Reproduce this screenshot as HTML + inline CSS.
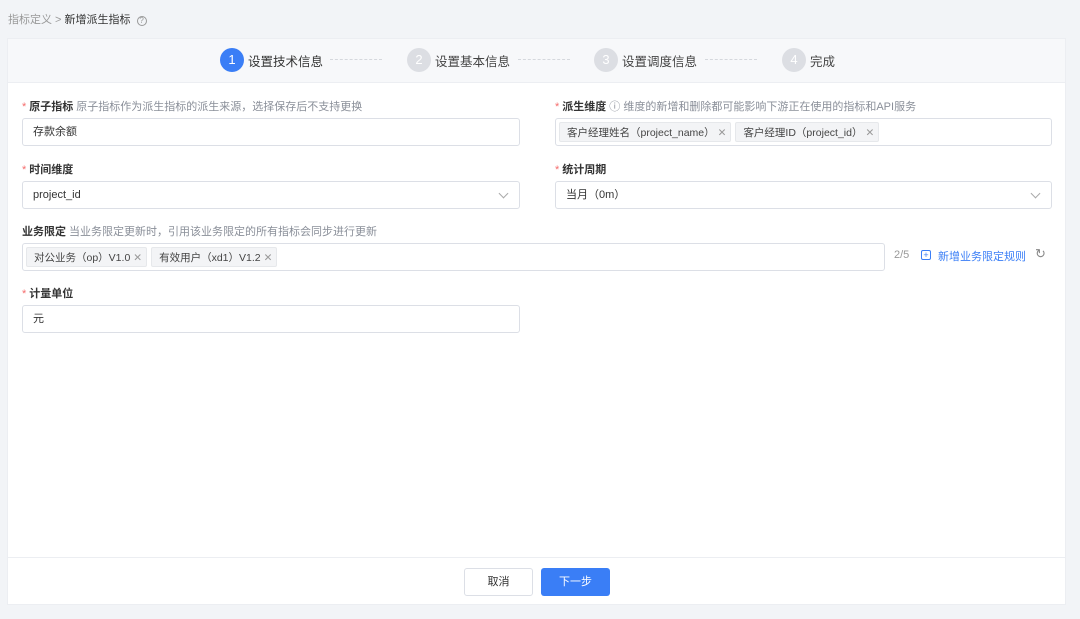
<!DOCTYPE html>
<html><head><meta charset="utf-8"><style>
*{box-sizing:border-box;margin:0;padding:0}
body{width:1080px;height:619px;background:#f2f4f7;font-family:"Liberation Sans","Noto Sans CJK SC",sans-serif;font-size:12px;color:#333;position:relative;overflow:hidden}
.a{position:absolute}
.card{left:7px;top:38px;width:1059px;height:567px;background:#fff;border:1px solid #eceef2}
.steps{left:0;top:0;width:1057px;height:44px;background:#f7f8fa;border-bottom:1px solid #eceef2}
.c{width:24px;height:24px;border-radius:50%;background:#dcdee3;color:#fff;text-align:center;line-height:24px;font-size:13px;top:9px}
.st{top:12px;font-size:12.5px;color:#444}
.dash{top:20px;width:52px;border-top:1px dashed #d5d8dd}
.lb{font-size:11px;color:#333;font-weight:bold}
.lb i{color:#f56c6c;font-style:normal;font-weight:normal;margin-right:3px}
.lb span{font-weight:normal;color:#8a8f99;margin-left:3px}
.in{height:28px;border:1px solid #dcdfe6;border-radius:3px;font-size:11px;padding-left:10px;line-height:26px;color:#333}
.tag{display:inline-block;height:20px;line-height:20px;background:#f3f4f6;border:1px solid #e6e8eb;border-radius:2px;padding:0 4px 0 7px;margin-right:4px;font-size:10.5px;color:#444}
.tag b{font-weight:normal;color:#999;margin-left:3px}
.chev{right:12px;top:8px;width:7px;height:7px;border-right:1px solid #aaa;border-bottom:1px solid #aaa;transform:rotate(45deg)}
</style></head><body>
<div class="a" style="left:8px;top:11px;font-size:11px;color:#999">指标定义 &gt; <span style="color:#333">新增派生指标</span> <span style="display:inline-block;width:10px;height:10px;border:1px solid #999;border-radius:50%;font-size:8px;line-height:8px;text-align:center;margin-left:3px">?</span></div>
<div class="a card">
 <div class="a steps">
  <div class="a c" style="left:212px;background:#3a7ef6">1</div><div class="a st" style="left:240px;color:#333">设置技术信息</div><div class="a dash" style="left:322px"></div>
  <div class="a c" style="left:399px">2</div><div class="a st" style="left:427px">设置基本信息</div><div class="a dash" style="left:510px"></div>
  <div class="a c" style="left:586px">3</div><div class="a st" style="left:614px">设置调度信息</div><div class="a dash" style="left:697px"></div>
  <div class="a c" style="left:774px">4</div><div class="a st" style="left:802px">完成</div>
 </div>
 <div class="a lb" style="left:14px;top:59px"><i>*</i>原子指标<span>原子指标作为派生指标的派生来源，选择保存后不支持更换</span></div>
 <div class="a in" style="left:14px;top:79px;width:498px">存款余额</div>
 <div class="a lb" style="left:547px;top:59px"><i>*</i>派生维度<span>ⓘ 维度的新增和删除都可能影响下游正在使用的指标和API服务</span></div>
 <div class="a in" style="left:547px;top:79px;width:497px;padding-left:3px;padding-top:3px;line-height:normal"><span class="tag">客户经理姓名（project_name）<b>✕</b></span><span class="tag">客户经理ID（project_id）<b>✕</b></span></div>
 <div class="a lb" style="left:14px;top:122px"><i>*</i>时间维度</div>
 <div class="a in" style="left:14px;top:142px;width:498px">project_id<div class="a chev"></div></div>
 <div class="a lb" style="left:547px;top:122px"><i>*</i>统计周期</div>
 <div class="a in" style="left:547px;top:142px;width:497px">当月（0m）<div class="a chev"></div></div>
 <div class="a lb" style="left:14px;top:184px">业务限定<span>当业务限定更新时，引用该业务限定的所有指标会同步进行更新</span></div>
 <div class="a in" style="left:14px;top:204px;width:863px;padding-left:3px;padding-top:3px;line-height:normal"><span class="tag">对公业务（op）V1.0<b>✕</b></span><span class="tag">有效用户（xd1）V1.2<b>✕</b></span></div>
 <div class="a" style="left:886px;top:210px;font-size:11px;color:#999">2/5</div>
 <div class="a" style="left:913px;top:211px;width:10px;height:10px;border:1px solid #3a7ef6;border-radius:2px;color:#3a7ef6;font-size:9px;line-height:8px;text-align:center">+</div>
 <div class="a" style="left:930px;top:209px;font-size:11px;color:#3a7ef6">新增业务限定规则</div>
 <div class="a" style="left:1027px;top:207px;font-size:13px;color:#888">↻</div>
 <div class="a lb" style="left:14px;top:246px"><i>*</i>计量单位</div>
 <div class="a in" style="left:14px;top:266px;width:498px">元</div>
 <div class="a" style="left:0;top:518px;width:1057px;border-top:1px solid #eceef2"></div>
 <div class="a" style="left:456px;top:529px;width:69px;height:28px;border:1px solid #dcdfe6;border-radius:3px;text-align:center;line-height:26px;font-size:11px">取消</div>
 <div class="a" style="left:533px;top:529px;width:69px;height:28px;background:#3a7ef6;border-radius:3px;text-align:center;line-height:28px;font-size:11px;color:#fff">下一步</div>
</div>
</body></html>
